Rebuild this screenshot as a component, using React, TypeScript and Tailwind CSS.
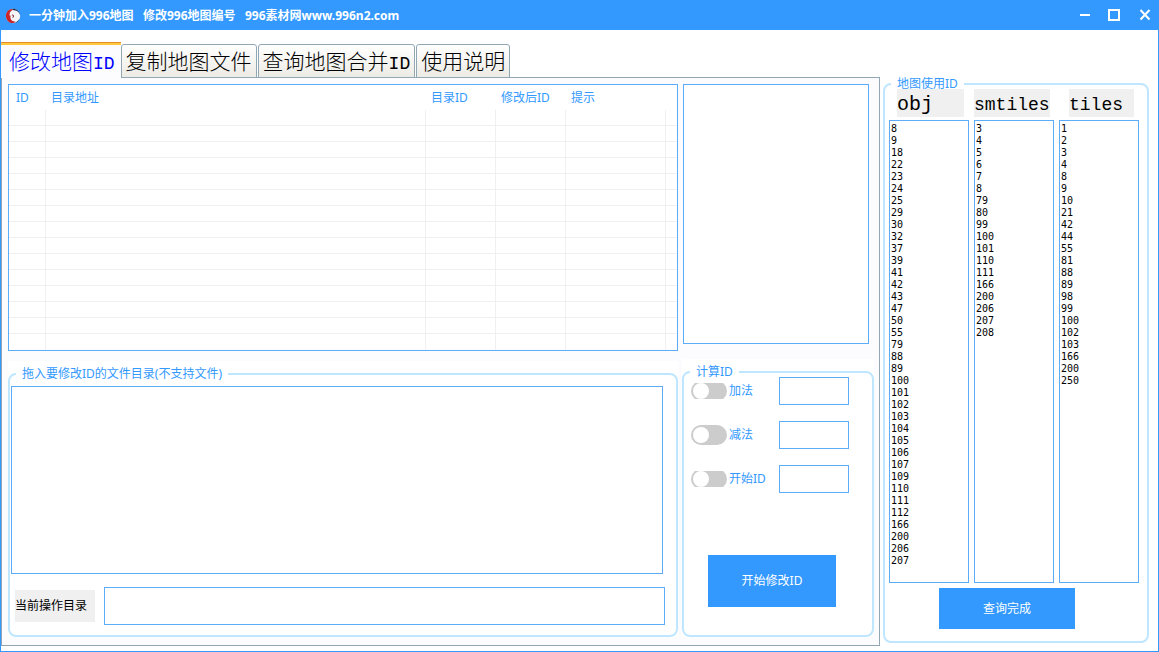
import { useState } from "react";

const tabs = [
  { name: "修改地图", suffix: "ID" },
  { name: "复制地图文件", suffix: "" },
  { name: "查询地图合并", suffix: "ID" },
  { name: "使用说明", suffix: "" },
];

const columns = ["ID", "目录地址", "目录ID", "修改后ID", "提示"];

const idLists = [
  {
    name: "obj",
    labelClass: "ml-2 w-[67px] text-[20px]",
    ids: [
      8, 9, 18, 22, 23, 24, 25, 29, 30, 32, 37, 39, 41, 42, 43, 47, 50, 55, 79,
      88, 89, 100, 101, 102, 103, 104, 105, 106, 107, 109, 110, 111, 112, 166,
      200, 206, 207,
    ],
  },
  {
    name: "smtiles",
    labelClass: "w-[76px] text-[18px]",
    ids: [
      3, 4, 5, 6, 7, 8, 79, 80, 99, 100, 101, 110, 111, 166, 200, 206, 207, 208,
    ],
  },
  {
    name: "tiles",
    labelClass: "ml-[10px] w-[65px] text-[18px]",
    ids: [
      1, 2, 3, 4, 8, 9, 10, 21, 42, 44, 55, 81, 88, 89, 98, 99, 100, 102, 103,
      166, 200, 250,
    ],
  },
];

const modes = [
  { id: "add", label: "加法", clip: "h-4" },
  { id: "subtract", label: "减法", clip: "h-5" },
  { id: "start", label: "开始ID", clip: "h-4" },
];

const box = "border border-[#5cacfa] bg-white outline-none";
const group =
  "flex min-w-0 flex-1 flex-col rounded-lg border-2 border-[#bfe6ff]";
const legend = "ml-[6px] px-[6px] leading-[10px] text-[#3399ff]";

function TitleBar() {
  return (
    <header className="flex h-[30px] shrink-0 items-center bg-[#3399ff] pl-[5px] pr-[6px] pt-px text-white">
      <svg width="16" height="16" viewBox="0 0 16 16" aria-hidden="true">
        <circle cx="8" cy="8" r="7.200" fill="#f4f6fa" />
        <path
          d="M7 .9C3 1.400 .7 4.500 .9 8.500c.2 3.600 2.900 6.300 6.200 6.600 1.700.1 2.800-.6 3.300-1.700-2.300.3-4.900-1.300-5-3.700 0-1.300.5-2 1-2.600L4.900 8.300C3.900 5.500 5 3 8 1.800z"
          fill="#c9242c"
        />
        <path
          d="M7.500 .8c4-.2 7 2.300 7.600 5.800L13.700 4.600c-.9-1.300-2-1.900-3.400-2.100L7.600 2z"
          fill="#26324a"
        />
        <path
          d="M7.200 6.600c1.400.3 2 1.100 1.800 2-.2.800-.9 1.300-1.900 1.300.7-.5.900-1 .8-1.600-.1-.6-.4-1-1.200-1.200z"
          fill="#8c2a34"
        />
        <path d="M14.800 10.300c-.8 2.600-2.500 4.300-5 4.800 2.200-1.200 3.800-2.700 5-4.800z" fill="#26324a" />
      </svg>
      <h1 className="ml-2 flex-1 whitespace-pre text-[12px] font-bold">
        一分钟加入996地图{"   "}修改996地图编号{"   "}996素材网www.996n2.com
      </h1>
      <div className="flex gap-[14px]">
        <button aria-label="最小化">
          <svg width="16" height="16" viewBox="0 0 16 16" fill="none" stroke="currentColor" strokeWidth="2">
            <path d="M3 7h10" />
          </svg>
        </button>
        <button aria-label="最大化">
          <svg width="16" height="16" viewBox="0 0 16 16" fill="none" stroke="currentColor" strokeWidth="2">
            <path d="M2 2h10v10H2z" />
          </svg>
        </button>
        <button aria-label="关闭">
          <svg width="16" height="16" viewBox="0 0 16 16" fill="none" stroke="currentColor" strokeWidth="2">
            <path d="M3.500 2l9 9.500M12.500 2l-9 9.500" />
          </svg>
        </button>
      </div>
    </header>
  );
}

function DirectoryTable() {
  return (
    <div className={`${box} h-[267px]`}>
      <table className="w-full table-fixed border-separate border-spacing-0">
        <colgroup>
          <col className="w-[37px]" />
          <col />
          <col className="w-[70px]" />
          <col className="w-[70px]" />
          <col className="w-[100px]" />
          <col className="w-[11px]" />
        </colgroup>
        <thead>
          <tr className="h-[25px] text-left text-[#3399ff]">
            {columns.map((col) => (
              <th
                key={col}
                className="whitespace-nowrap p-0 pl-[5px] font-normal first:pl-[7px]"
              >
                {col}
              </th>
            ))}
            <td className="p-0" />
          </tr>
        </thead>
        <tbody>
          {Array.from({ length: 15 }, (_, row) => (
            <tr key={row} className="group h-4">
              {Array.from({ length: 6 }, (_, col) => (
                <td
                  key={col}
                  className="border-b border-r border-[#f0f0f0] p-0 last:border-r-0 group-last:border-b-0"
                />
              ))}
            </tr>
          ))}
        </tbody>
      </table>
    </div>
  );
}

function DropGroup() {
  return (
    <div className="flex flex-1 bg-white pt-2">
      <fieldset className={group}>
        <legend className={legend}>拖入要修改ID的文件目录(不支持文件)</legend>
        <textarea
          aria-label="文件目录"
          className={`${box} ml-px mr-[13px] mt-[7px] min-h-[188px] flex-1 resize-none`}
        />
        <div className="mb-[10px] ml-[5px] mr-[11px] mt-[13px] flex items-center gap-[9px]">
          <label
            htmlFor="current-dir"
            className="h-8 w-20 bg-[#f0f0f0] leading-8 text-black"
          >
            当前操作目录
          </label>
          <input id="current-dir" className={`${box} h-[38px] min-w-0 flex-1 px-1`} />
        </div>
      </fieldset>
    </div>
  );
}

function CalcGroup() {
  return (
    <div className="flex flex-1 bg-white pt-2">
      <fieldset className={group}>
        <legend className={legend}>计算ID</legend>
        <div className="flex flex-col gap-4 pl-[7px]">
          {modes.map((mode) => (
            <div key={mode.id} className="flex h-7 items-center">
              <label className="flex w-[88px] items-center gap-[2px] text-[#3399ff]">
                <span className={`flex items-center overflow-hidden ${mode.clip}`}>
                  <input
                    type="checkbox"
                    className="flex h-5 w-9 shrink-0 appearance-none items-center rounded-full bg-[#cccccc] px-[2px] before:size-4 before:rounded-full before:bg-white checked:justify-end checked:bg-[#3399ff]"
                  />
                </span>
                {mode.label}
              </label>
              <input aria-label={mode.label} className={`${box} h-7 w-[70px] px-1`} />
            </div>
          ))}
        </div>
        <button className="mb-7 ml-6 mt-auto h-[52px] w-32 bg-[#3399ff] text-white">
          开始修改ID
        </button>
      </fieldset>
    </div>
  );
}

function UsedIds() {
  return (
    <aside className="flex w-[266px] shrink-0 pb-[3px] pt-[49px]">
      <fieldset className={group}>
        <legend className={legend}>地图使用ID</legend>
        <div className="flex flex-1 gap-[5px] pl-1 pr-2">
          {idLists.map((list) => (
            <div key={list.name} className="flex min-w-0 flex-1 flex-col gap-[3px]">
              <label
                htmlFor={list.name}
                className={`h-7 bg-[#f0f0f0] font-['Liberation_Mono',monospace] leading-8 text-black ${list.labelClass}`}
              >
                {list.name}
              </label>
              <textarea
                id={list.name}
                readOnly
                defaultValue={list.ids.join("\n")}
                className={`${box} min-h-[463px] w-full flex-1 resize-none px-px py-[2px] font-['DejaVu_Sans_Mono',monospace] text-[10px] leading-3 text-black`}
              />
            </div>
          ))}
        </div>
        <button className="mb-3 ml-[54px] mt-[5px] h-[41px] w-[136px] bg-[#3399ff] text-white">
          查询完成
        </button>
      </fieldset>
    </aside>
  );
}

export default function App() {
  const [active, setActive] = useState(0);

  return (
    <div className="flex min-h-screen flex-col bg-white font-['Noto_Sans','Noto_Sans_CJK_SC',sans-serif] text-[12px]">
      <TitleBar />
      <main className="flex flex-1 gap-[3px] border border-t-0 border-[#3399ff] pb-[5px] pr-[9px]">
        <section className="flex min-w-0 flex-1 flex-col pt-3">
          <nav className="-mb-px flex items-end">
            {tabs.map((tab, i) => (
              <button
                key={tab.name}
                onClick={() => setActive(i)}
                className={`flex items-start whitespace-nowrap font-['Noto_Sans_CJK_SC',sans-serif] text-[21px] font-light leading-8 ${
                  i === active
                    ? "relative h-9 rounded-t-[2px] border-t-[3px] border-[#ffc73c] bg-[#fcfcff] pl-2 pr-[6px] text-[#0000ff] before:absolute before:inset-x-0 before:-top-[3px] before:h-px before:bg-[#e68b2c]"
                    : "mr-px h-[34px] rounded-t-[3px] border border-[#91a7b4] bg-linear-to-b from-white to-[#ecebe5] px-1 text-black"
                }`}
              >
                <span className="leading-[30px]">
                  {tab.name}
                  {tab.suffix && (
                    <span className="font-['Liberation_Mono',monospace] text-[18px]">
                      {tab.suffix}
                    </span>
                  )}
                </span>
              </button>
            ))}
          </nav>
          <div className="flex flex-1 gap-1 border border-[#91a7b4] bg-[#fcfcff] pb-2 pl-[6px] pr-[5px] pt-[6px]">
            <div className="flex min-w-0 flex-1 flex-col gap-[10px]">
              <DirectoryTable />
              <DropGroup />
            </div>
            <div className="flex w-48 shrink-0 flex-col gap-[15px]">
              <div className={`${box} ml-px mr-[5px] h-[260px]`} />
              <CalcGroup />
            </div>
          </div>
        </section>
        <UsedIds />
      </main>
    </div>
  );
}
